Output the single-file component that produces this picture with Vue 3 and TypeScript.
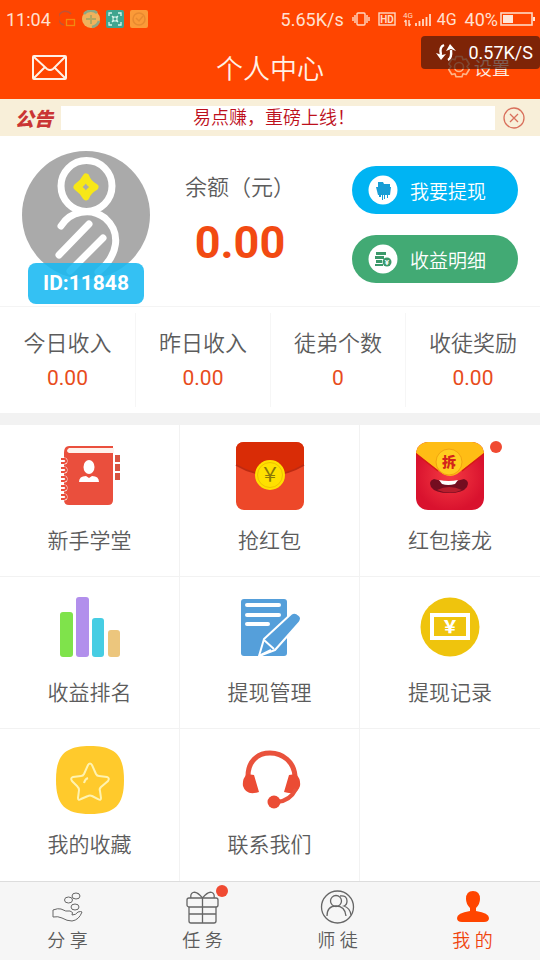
<script setup lang="ts">
interface Stat {
  label: string
  value: string
}

interface Entry {
  icon: string
  label: string
  dot?: boolean
}

const stats: Stat[] = [
  { label: '今日收入', value: '0.00' },
  { label: '昨日收入', value: '0.00' },
  { label: '徒弟个数', value: '0' },
  { label: '收徒奖励', value: '0.00' },
]

const entries: Entry[] = [
  { icon: 'book', label: '新手学堂' },
  { icon: 'packet', label: '抢红包' },
  { icon: 'chain', label: '红包接龙', dot: true },
  { icon: 'rank', label: '收益排名' },
  { icon: 'manage', label: '提现管理' },
  { icon: 'record', label: '提现记录' },
  { icon: 'star', label: '我的收藏' },
  { icon: 'headset', label: '联系我们' },
]

const tabs: Entry[] = [
  { icon: 'share', label: '分 享' },
  { icon: 'gift', label: '任 务', dot: true },
  { icon: 'team', label: '师 徒' },
  { icon: 'me', label: '我 的' },
]

const ringRows = [14, 23, 32, 41, 50]

const activeTab = 'me'
</script>

<template>
  <div class="page">
    <header class="top">
      <div class="status">
        <span>11:04</span>
        <svg class="status-left" width="90" height="20" viewBox="0 0 90 20">
          <path d="M12 4A7 7 0 1 0 5 15" fill="none" stroke="#a65a4b" stroke-width="1.5" opacity=".7" />
          <rect x="7.500" y="9.500" width="8" height="6" fill="none" stroke="#f08a10" stroke-width="1.300" />
          <circle cx="32" cy="9" r="9" fill="#f0b25c" />
          <path d="M25 4a9 9 0 0 1 13-1M40 11a9 9 0 0 1-7 6" fill="none" stroke="#8da884" stroke-width="2.500" />
          <path d="M32 5v9M27 9h10" stroke="#b4a860" stroke-width="2" />
          <rect x="47" y="0" width="18" height="18" rx="2" fill="#3fa58f" />
          <path d="M50 6V3h3M59 3h3v3M62 12v3h-3M53 15h-3v-3M53 6l2 2M59 6l-2 2M53 12l2-2M59 12l-2-2" fill="none" stroke="#d8f5ea" stroke-width="1.300" />
          <rect x="54" y="7" width="4" height="4" fill="none" stroke="#d8f5ea" />
          <rect x="71" y="0" width="18" height="18" rx="2" fill="#fb9a38" />
          <circle cx="80" cy="9" r="6" fill="none" stroke="#e88a30" stroke-width="1.500" />
          <path d="M77 8l3 3 4-5" fill="none" stroke="#e88a30" stroke-width="1.500" />
        </svg>
        <span class="rate">5.65K/s</span>
        <svg class="status-mid" width="80" height="20" viewBox="0 0 80 20" fill="none" stroke="#ffd9c4" stroke-width="1.400">
          <rect x="5" y="3" width="8" height="12" rx="1" />
          <path d="M3 5v8M15 5v8M1 7v4M17 7v4" />
          <rect x="27" y="3" width="16" height="12" />
          <text x="35" y="13" class="svg-hd" text-anchor="middle">HD</text>
          <text x="51" y="8" class="svg-4g">4G</text>
          <path d="M54 10v6M57 10v6M52.500 12l1.500-2M58.500 14l-1.500 2" />
          <path d="M64 13v3M67.500 11v5M71 9v7M74.500 7v9M78 4v12" stroke-width="1.800" />
        </svg>
        <span class="net">4G</span>
        <span class="percent">40%</span>
        <svg width="36" height="18" viewBox="0 0 36 18">
          <rect x="1" y="2" width="31" height="12" fill="none" stroke="#ffd9c4" stroke-width="1.600" />
          <path d="M3 4h10v8H3zM33 6h2v4h-2z" fill="#ffe6d8" />
        </svg>
      </div>
      <nav class="nav">
        <a class="mail" href="#" aria-label="消息">
          <svg width="36" height="28" viewBox="0 0 36 28" fill="none" stroke="#fff1e6" stroke-width="2">
            <rect x="1" y="3" width="33" height="23" rx="1" />
            <path d="M2 4l13 12q3 2 6 0L33 4M2 25l11-11M33 25L22 14" />
          </svg>
        </a>
        <h1>个人中心</h1>
        <a class="setting" href="#">
          <svg width="24" height="24" viewBox="0 0 24 24" fill="none" stroke="#ffb488" stroke-width="1.600">
            <path d="M9 1.500h6l1 3.200 3.200-.7 3 5-2.200 2.500 2.200 3-3 5-3.200-.8-1 3H9l-1-3-3.200.8-3-5L4 11.500 1.800 9l3-5 3.200.7z" stroke-linejoin="round" />
            <circle cx="12" cy="12" r="4.500" />
          </svg>
          <span>设置</span>
        </a>
      </nav>
      <div class="speed">
        <svg width="20" height="20" viewBox="0 0 20 20">
          <path d="M8 2Q3 4 5 12M12 17q4-2 3-10" fill="none" stroke="#fff" stroke-width="2.400" />
          <path d="M0 10l5 7 5-6-4 1zM10 8l4-7 6 7-5-2z" fill="#fff" />
        </svg>
        <span>0.57K/S</span>
      </div>
    </header>

    <section class="notice">
      <strong>公告</strong>
      <p>易点赚，重磅上线！</p>
      <button type="button" aria-label="关闭">
        <svg width="22" height="22" viewBox="0 0 22 22" fill="none" stroke="#d9705c" stroke-width="1.300">
          <circle cx="11" cy="11" r="10" />
          <path d="M7 7l8 8M15 7l-8 8" />
        </svg>
      </button>
    </section>

    <section class="profile">
      <div class="user">
        <svg width="128" height="128" viewBox="0 0 128 128" fill="none">
          <defs>
            <clipPath id="avatar-clip"><circle cx="64" cy="64" r="64" /></clipPath>
          </defs>
          <circle cx="64" cy="64" r="64" fill="#aaa" />
          <g clip-path="url(#avatar-clip)" stroke="#fff" stroke-width="7" stroke-linecap="round">
            <circle cx="64.500" cy="35" r="25.500" />
            <path d="M39 75C48 60 69 56 83 67C100 82 96 105 76 121M67 73L37 104M81 87L48 120" />
          </g>
          <path d="M64 26q2 6 9 10-7 4-9 10-3-6-9-10 6-4 9-10z" stroke="#f7e718" stroke-width="7" stroke-linejoin="round" />
        </svg>
        <span class="uid">ID:11848</span>
      </div>
      <div class="balance">
        <span class="balance-label">余额（元）</span>
        <strong>0.00</strong>
      </div>
      <div class="actions">
        <button class="pill blue" type="button">
          <svg width="30" height="30" viewBox="0 0 30 30">
            <circle cx="15" cy="15" r="14.500" fill="#fff" />
            <path d="M10 7h5l1 2h6v3H10zM8 12h15l-1 8H10zM11 20h2v2h-2zM14 20h1v5h-1zM16 20h1v4h-1zM19 20h1v3h-1z" fill="#179ed6" />
          </svg>
          <span>我要提现</span>
        </button>
        <button class="pill green" type="button">
          <svg width="30" height="30" viewBox="0 0 30 30">
            <circle cx="15" cy="15" r="14.500" fill="#fff" />
            <path d="M8 8h10v3H8zM7 12h9v3H7zM8 16h6v3H8zM7 20h8v2H7z" fill="#3b996a" />
            <circle cx="19" cy="18" r="4.500" fill="#3b996a" />
            <text x="19" y="21" class="svg-coin" text-anchor="middle">¥</text>
          </svg>
          <span>收益明细</span>
        </button>
      </div>
    </section>

    <dl class="stats">
      <div v-for="s in stats" :key="s.label">
        <dt>{{ s.label }}</dt>
        <dd>{{ s.value }}</dd>
      </div>
    </dl>

    <main class="grid">
      <a v-for="e in entries" :key="e.icon" class="cell" href="#">
        <span class="icon">
          <svg v-if="e.icon === 'book'" width="70" height="70" viewBox="0 0 70 70">
            <path d="M9 12q0-7 5-7h44v54q0 5-5 5H14q-5 0-5-5z" fill="#ea4f3d" />
            <path d="M14 7h45v5H14q-4-2 0-5z" fill="#fff2ec" />
            <g v-for="y in ringRows" :key="y" transform="translate(0 5)">
              <circle cx="9" :cy="y + 1" r="3.500" fill="#fff" />
              <path :d="`M6 ${y - 1}h4q3 3-1 4H6`" fill="none" stroke="#ea4f3d" stroke-width="2" />
            </g>
            <path d="M60 14h5v7h-5zM60 23h5v7h-5zM60 32h5v7h-5z" fill="#d85340" />
            <ellipse cx="34" cy="26" rx="5.500" ry="7" fill="#fff" />
            <path d="M24 41q0-6 7-6l3 2 3-2q7 0 7 6z" fill="#fff" />
          </svg>
          <svg v-else-if="e.icon === 'packet'" width="70" height="70" viewBox="0 0 70 70">
            <rect x="1" y="1" width="68" height="68" rx="8" fill="#ed4829" />
            <path d="M1 24V9q0-8 8-8h52q8 0 8 8v15Q35 44 1 24z" fill="#d92c06" />
            <path d="M1 24q34 20 68 0" fill="none" stroke="#bd2a12" stroke-width="1.500" />
            <circle cx="35" cy="34" r="15" fill="#ffe000" />
            <circle cx="35" cy="34" r="12.500" fill="none" stroke="#eec200" />
            <text x="35" y="41" class="svg-yen" text-anchor="middle">￥</text>
          </svg>
          <svg v-else-if="e.icon === 'chain'" width="70" height="70" viewBox="0 0 70 70">
            <defs>
              <radialGradient id="red-face">
                <stop offset="0" stop-color="#f53b43" />
                <stop offset="1" stop-color="#d9122e" />
              </radialGradient>
              <clipPath id="face-clip"><rect x="1" y="1" width="68" height="68" rx="12" /></clipPath>
            </defs>
            <g clip-path="url(#face-clip)">
              <rect width="70" height="70" fill="url(#red-face)" />
              <path d="M0 0h70v12L42 33q-7 4-14 0L0 12z" fill="#ffbd15" />
              <path d="M0 12l23 18M70 12L47 30" stroke="#d71a17" stroke-width="1.500" />
            </g>
            <circle cx="34" cy="21" r="13" fill="#ffce20" stroke="#f2a310" />
            <text x="34" y="26" class="svg-open" text-anchor="middle">拆</text>
            <path d="M19 38q-6 2-3 8 4 6 18 6t18-6q3-6-3-8-15 5-30 0z" fill="#740d20" />
            <path d="M22 49q12-6 25 0-12 5-25 0z" fill="#b71d2d" />
            <path d="M24 39q10 2 19 0l-3 4q-7 2-13 0z" fill="#fff" />
          </svg>
          <svg v-else-if="e.icon === 'rank'" width="70" height="70" viewBox="0 0 70 70">
            <rect x="5" y="19" width="13" height="45" rx="3" fill="#7fe34b" />
            <rect x="21" y="4" width="13" height="60" rx="3" fill="#b28fec" />
            <rect x="37" y="25" width="12" height="39" rx="3" fill="#46cde3" />
            <rect x="53" y="37" width="12" height="27" rx="3" fill="#ecc67d" />
          </svg>
          <svg v-else-if="e.icon === 'manage'" width="70" height="70" viewBox="0 0 70 70">
            <rect x="6" y="6" width="46" height="57" rx="3" fill="#559fda" />
            <path d="M12 12h32M12 22h32M12 31h21" stroke="#fff" stroke-width="4" stroke-linecap="round" />
            <path d="M24 63l5-17 27-25q4-3 8 1 4 3 0 8L40 57z" fill="#559fda" stroke="#fff" stroke-width="2" stroke-linejoin="round" />
            <path d="M29 47l10 9M24 63l12-6" stroke="#fff" stroke-width="2" />
          </svg>
          <svg v-else-if="e.icon === 'record'" width="70" height="70" viewBox="0 0 70 70">
            <circle cx="35" cy="34" r="29.500" fill="#efc40d" />
            <rect x="17" y="22" width="36" height="23" fill="none" stroke="#fff" stroke-width="4" />
            <text x="35" y="40" class="svg-bill" text-anchor="middle">￥</text>
          </svg>
          <svg v-else-if="e.icon === 'star'" width="70" height="70" viewBox="0 0 70 70">
            <path d="M35 1C60 1 69 10 69 35S60 69 35 69 1 60 1 35 10 1 35 1z" fill="#ffca2c" />
            <path d="M33 20q2-3 4 0l4 9q1 2 3 2l8 1q3 1 1 4l-7 6q-2 2-1 4l1 7q0 3-3 1l-6-3q-2-1-4 0l-7 3q-3 2-3-1l1-8q0-2-2-4l-5-5q-2-3 1-4l8-1q2 0 3-2z" fill="none" stroke="#fff3b0" stroke-width="2" />
            <path d="M29 38q1-4 4-5" fill="none" stroke="#fff3b0" stroke-width="2" />
          </svg>
          <svg v-else width="70" height="70" viewBox="0 0 70 70">
            <path d="M13 31C13 17 22 8 35 8S59 17 60 31" fill="none" stroke="#e9523c" stroke-width="5" />
            <path d="M12 29l7 1 5 17q-13 4-16-6-1-7 4-12zM61 29l-7 1-5 17q13 4 16-6 1-7-4-12z" fill="#eb4c34" />
            <path d="M61 44q-6 12-19 13" fill="none" stroke="#e9523c" stroke-width="4" />
            <circle cx="39" cy="57" r="6.500" fill="#eb4c34" />
          </svg>
          <i v-if="e.dot" class="dot" />
        </span>
        <span class="cell-label">{{ e.label }}</span>
      </a>
    </main>

    <nav class="tabs">
      <a v-for="t in tabs" :key="t.icon" class="tab" :class="{ active: t.icon === activeTab }" href="#">
        <span class="icon">
          <svg width="36" height="36" viewBox="0 0 36 36" fill="none" stroke="#666" stroke-width="1.300">
            <g v-if="t.icon === 'share'" stroke-width="1">
              <ellipse cx="18.500" cy="11" rx="4" ry="3" />
              <ellipse cx="26" cy="7" rx="4" ry="3" />
              <ellipse cx="25" cy="18" rx="4" ry="3" />
              <path d="M3 21q5-2 8-1 5 3 9 2 4 1 2 4 4 0 6-3 3-1 4 0-3 8-10 9-5 0-10-3-4-2-9-1z" />
            </g>
            <g v-else-if="t.icon === 'gift'">
              <rect x="2" y="9" width="31" height="9" rx="2" />
              <path d="M4 18v14q0 2 2 2h23q2 0 2-2V18M17.500 9v25M4 25h27M17.500 9Q12 2 8 3.500 5 5 6 9M17.500 9Q23 2 27 3.500 30 5 29 9" />
            </g>
            <g v-else-if="t.icon === 'team'">
              <circle cx="17.500" cy="18" r="16" />
              <circle cx="16" cy="12" r="5.500" />
              <path d="M7 27q0-10 9-10t10 10M20 7q7-1 7 5 0 4-3 5 6 2 7 9" />
            </g>
            <path v-else d="M18 2q7 0 7 8 0 5-4 9v3q13 2 13 7 0 4-5 4H7q-5 0-5-4 0-5 13-7v-3q-4-4-4-9 0-8 7-8z" fill="#ff4500" stroke="none" />
          </svg>
          <i v-if="t.dot" class="dot" />
        </span>
        <span>{{ t.label }}</span>
      </a>
    </nav>
  </div>
</template>

<style>
body {
  margin: 0;
}
</style>

<style scoped>
.page {
  display: flex;
  flex-direction: column;
  min-height: 100vh;
  background: #fff;
  color: #5c5c5c;
  font-family: Roboto, "Noto Sans CJK SC", sans-serif;
  font-weight: 350;
}

a {
  color: inherit;
  text-decoration: none;
}

button {
  border: 0;
  padding: 0;
  background: none;
  font: inherit;
}

svg {
  display: block;
  flex: none;
}

.top {
  position: relative;
  background: #ff4500;
  color: #fff1e6;
}

.status {
  display: flex;
  align-items: center;
  height: 39px;
  padding: 0 4px 0 6px;
  color: #ffe0d0;
  font-size: 18px;
  font-weight: 400;
}

.status-left {
  margin-left: 8px;
}

.rate {
  margin-left: auto;
}

.status-mid {
  margin-left: 8px;
}

.net {
  margin-left: 5px;
  font-size: 16px;
}

.percent {
  margin: 0 2px 0 8px;
}

.svg-hd {
  fill: #ffd9c4;
  stroke: none;
  font-size: 10px;
  font-weight: 700;
}

.svg-4g {
  fill: #ffd9c4;
  stroke: none;
  font-size: 8px;
}

.nav {
  display: grid;
  grid-template-columns: 1fr auto 1fr;
  align-items: center;
  box-sizing: border-box;
  height: 60px;
  padding: 0 30px 4px;
}

.mail {
  justify-self: start;
  margin-left: 2px;
}

h1 {
  margin: 0;
  font-size: 27px;
  font-weight: 350;
}

.setting {
  display: flex;
  align-items: center;
  gap: 3px;
  justify-self: end;
  font-size: 18px;
}

.speed {
  position: absolute;
  top: 36px;
  right: 0;
  display: flex;
  align-items: center;
  justify-content: flex-end;
  gap: 12px;
  box-sizing: border-box;
  width: 119px;
  height: 33px;
  padding-right: 7px;
  border-radius: 4px;
  background: rgba(65, 20, 10, 0.68);
  color: #fff;
  font-size: 18px;
  font-weight: 400;
}

.notice {
  display: flex;
  align-items: center;
  height: 37px;
  padding: 0 15px;
  background: #f8efd9;
}

.notice strong {
  width: 46px;
  color: #ca3534;
  font-size: 19px;
  font-style: italic;
  font-weight: 900;
}

.notice p {
  flex: 1;
  margin: 0 8px 0 0;
  padding-right: 8px;
  background: #fff;
  color: #bd101c;
  font-size: 18px;
  line-height: 24px;
  text-align: center;
}

.profile {
  display: grid;
  grid-template-columns: 144px 1fr 166px;
  align-items: start;
  padding: 15px 22px 2px;
  border-bottom: 1px solid #f4f4f4;
}

.user {
  display: flex;
  flex-direction: column;
  width: 128px;
}

.uid {
  z-index: 1;
  align-self: center;
  width: 116px;
  margin-top: -16px;
  border-radius: 8px;
  background: rgba(24, 184, 241, 0.88);
  color: #fff;
  font-size: 21px;
  font-weight: 700;
  line-height: 41px;
  text-align: center;
}

.balance {
  display: flex;
  flex-direction: column;
  align-items: center;
  padding: 20px 38px 0 0;
}

.balance-label {
  font-size: 22px;
  line-height: 34px;
  white-space: nowrap;
}

.balance strong {
  margin-top: 9px;
  color: #f24a12;
  font-size: 45px;
  font-weight: 700;
  line-height: 58px;
}

.actions {
  display: grid;
  gap: 21px;
  padding-top: 15px;
}

.pill {
  display: flex;
  align-items: center;
  gap: 12px;
  height: 48px;
  padding-left: 16px;
  border-radius: 24px;
  color: #fff;
  font-size: 19px;
}

.blue {
  background: #00b4f3;
}

.green {
  background: #42aa74;
}

.svg-coin {
  fill: #fff;
  font-size: 8px;
  font-weight: 700;
}

.stats {
  display: grid;
  grid-template-columns: repeat(4, 1fr);
  margin: 0;
  padding: 6px 0;
  border-bottom: 12px solid #f2f2f2;
  text-align: center;
}

.stats div {
  padding: 14px 0;
}

.stats div + div {
  border-left: 1px solid #f6f6f6;
}

.stats dt {
  font-size: 22px;
  line-height: 34px;
}

.stats dd {
  margin: 0;
  padding-top: 3px;
  color: #e84c1c;
  font-size: 21px;
  font-weight: 400;
  line-height: 29px;
}

.grid {
  display: grid;
  flex: 1;
  grid-template-columns: repeat(3, 1fr);
}

.cell {
  display: flex;
  flex-direction: column;
  align-items: center;
  box-sizing: border-box;
  min-height: 152px;
  padding-top: 16px;
  border-right: 1px solid #f2f2f2;
  border-bottom: 1px solid #f2f2f2;
}

.cell:nth-child(3n) {
  border-right: 0;
}

.cell:nth-child(n + 7) {
  border-bottom: 0;
}

.icon {
  position: relative;
}

.cell-label {
  margin-top: 14px;
  font-size: 21px;
  line-height: 32px;
}

.dot {
  position: absolute;
  top: 0;
  right: -17px;
  width: 12px;
  height: 12px;
  border-radius: 50%;
  background: #f04a32;
}

.svg-yen {
  fill: #8c7708;
  font-size: 20px;
  font-weight: 400;
}

.svg-open {
  fill: #d3241b;
  font-size: 14px;
  font-weight: 900;
}

.svg-bill {
  fill: #fff;
  font-size: 17px;
  font-weight: 900;
}

.tabs {
  display: grid;
  grid-template-columns: repeat(4, 1fr);
  border-top: 1px solid #ddd;
  background: #f6f6f6;
}

.tab {
  display: flex;
  flex-direction: column;
  align-items: center;
  gap: 1px;
  padding: 7px 0 6px;
  font-size: 18px;
  line-height: 29px;
}

.tab .dot {
  top: -4px;
  right: -7px;
}

.active {
  color: #f0440e;
}
</style>
